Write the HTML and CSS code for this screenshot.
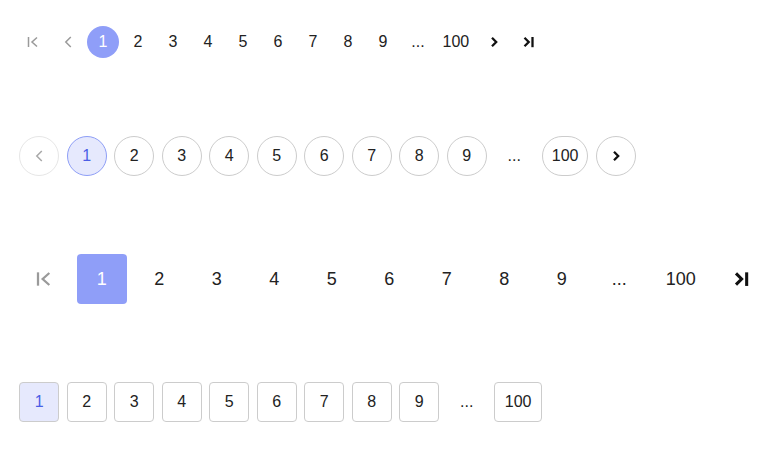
FILE: index.html
```html
<!DOCTYPE html>
<html lang="en">
<head>
<meta charset="utf-8">
<title>Pagination</title>
<link rel="stylesheet" href="styles.css">
</head>
<body>
<div class="page">
  <nav class="pg pg-plain">
    <span class="item nav disabled"><svg class="ico" width="12" height="12" viewBox="0 0 12 12"><line x1="1.5" y1="1" x2="1.5" y2="11"/><polyline points="10,1.5 5,6 10,10.5"/></svg></span>
    <span class="item nav disabled"><svg class="ico" width="8" height="12" viewBox="0 0 8 12"><polyline points="6.8,1 1.8,6 6.8,11"/></svg></span>
    <span class="item active">1</span>
    <span class="item">2</span>
    <span class="item">3</span>
    <span class="item">4</span>
    <span class="item">5</span>
    <span class="item">6</span>
    <span class="item">7</span>
    <span class="item">8</span>
    <span class="item">9</span>
    <span class="item gap">...</span>
    <span class="item">100</span>
    <span class="item nav"><svg class="ico bold" width="8" height="12" viewBox="0 0 8 12"><polyline points="2,1.8 6.2,6 2,10.2"/></svg></span>
    <span class="item nav"><svg class="ico bold" width="12" height="12" viewBox="0 0 12 12"><polyline points="1.5,1.8 5.7,6 1.5,10.2"/><line x1="9.5" y1="1" x2="9.5" y2="11.2"/></svg></span>
  </nav>

  <nav class="pg pg-circle">
    <span class="item nav disabled"><svg class="ico" width="8" height="12" viewBox="0 0 8 12"><polyline points="6.8,1 1.8,6 6.8,11"/></svg></span>
    <span class="item active">1</span>
    <span class="item">2</span>
    <span class="item">3</span>
    <span class="item">4</span>
    <span class="item">5</span>
    <span class="item">6</span>
    <span class="item">7</span>
    <span class="item">8</span>
    <span class="item">9</span>
    <span class="item gap">...</span>
    <span class="item">100</span>
    <span class="item nav"><svg class="ico bold" width="8" height="12" viewBox="0 0 8 12"><polyline points="2,1.8 6.2,6 2,10.2"/></svg></span>
  </nav>

  <nav class="pg pg-block">
    <span class="item nav disabled"><svg class="ico big" width="16" height="16" viewBox="0 0 12 12"><line x1="1.5" y1="1" x2="1.5" y2="11"/><polyline points="10,1.5 5,6 10,10.5"/></svg></span>
    <span class="item active">1</span>
    <span class="item">2</span>
    <span class="item">3</span>
    <span class="item">4</span>
    <span class="item">5</span>
    <span class="item">6</span>
    <span class="item">7</span>
    <span class="item">8</span>
    <span class="item">9</span>
    <span class="item gap">...</span>
    <span class="item">100</span>
    <span class="item nav"><svg class="ico bold" width="16" height="16" viewBox="0 0 12 12"><polyline points="1.5,1.8 5.7,6 1.5,10.2"/><line x1="9.5" y1="1" x2="9.5" y2="11.2"/></svg></span>
  </nav>

  <nav class="pg pg-box">
    <span class="item active">1</span>
    <span class="item">2</span>
    <span class="item">3</span>
    <span class="item">4</span>
    <span class="item">5</span>
    <span class="item">6</span>
    <span class="item">7</span>
    <span class="item">8</span>
    <span class="item">9</span>
    <span class="item gap">...</span>
    <span class="item">100</span>
  </nav>
</div>
</body>
</html>
```

FILE: styles.css
```css
html, body {
  margin: 0;
  background: #ffffff;
}

body {
  font-family: "Liberation Sans", Arial, sans-serif;
  color: #222222;
}

.page {
  display: flex;
  flex-direction: column;
  align-items: flex-start;
  gap: 78px;
  padding: 25.5px 15.5px 0;
}

.pg {
  display: flex;
  align-items: center;
}

.item {
  display: flex;
  align-items: center;
  justify-content: center;
  box-sizing: border-box;
  font-size: 16px;
  line-height: 1;
  cursor: pointer;
}

.ico {
  display: block;
  fill: none;
  stroke: #9a9a9a;
  stroke-width: 1.5;
}

.ico.big {
  stroke-width: 1.7;
}

.ico.bold {
  stroke: #111111;
  stroke-width: 2.3;
}

/* Row 1: plain with filled round active */
.pg-plain .item {
  min-width: 32px;
  height: 32px;
  margin: 0 1.5px;
  padding: 0 5.5px;
}

.pg-plain .active {
  background: #8f9ef8;
  color: #ffffff;
  border-radius: 50%;
}

/* Row 2: outlined circles */
.pg-circle .item {
  min-width: 40px;
  height: 40px;
  margin: 0 3.75px;
  padding: 0 9px;
  border: 1px solid #cccccc;
  border-radius: 20px;
}

.pg-circle .gap {
  border-color: transparent;
}

.pg-circle .disabled {
  border-color: #e6e6e6;
}

.pg-circle .disabled .ico {
  stroke: #a8a8a8;
}

.pg-circle .active,
.pg-box .active {
  background: #e6e9fd;
  border-color: #8e9ef6;
  color: #4a5ee6;
}

/* Row 3: large blocks */
.pg-block .item {
  min-width: 50px;
  height: 50px;
  margin: 0 3.75px;
  padding: 0 14px;
  font-size: 18px;
}

.pg-block .active {
  background: #8f9ef8;
  color: #ffffff;
  border-radius: 4px;
}

/* Row 4: outlined squares */
.pg-box .item {
  min-width: 40px;
  height: 40px;
  margin: 0 3.75px;
  padding: 0 9.5px;
  border: 1px solid #cccccc;
  border-radius: 4px;
}

.pg-box .gap {
  border-color: transparent;
}
```
